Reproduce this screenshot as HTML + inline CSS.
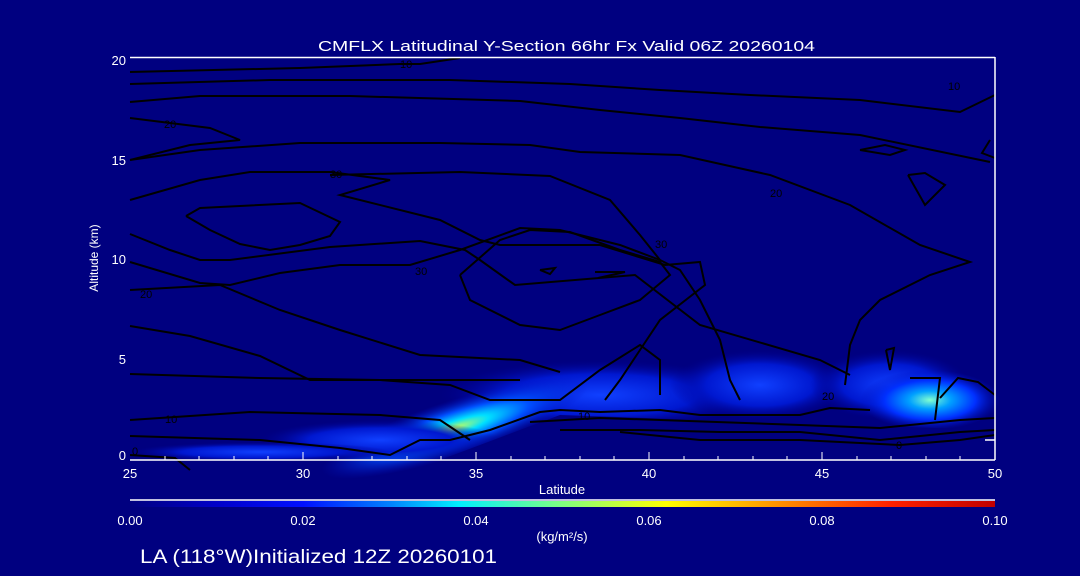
<!DOCTYPE html>
<html><head><meta charset="utf-8"><style>
html,body{margin:0;padding:0;background:#000080;}
svg{display:block}
text{font-family:"Liberation Sans",sans-serif;fill:#fff}
</style></head><body>
<svg width="1080" height="576" viewBox="0 0 1080 576" xmlns="http://www.w3.org/2000/svg">
<defs>
<linearGradient id="cb" x1="0" x2="1" y1="0" y2="0">
<stop offset="0" stop-color="#000080"/>
<stop offset="0.1" stop-color="#0000c8"/>
<stop offset="0.2" stop-color="#0010ff"/>
<stop offset="0.3" stop-color="#0080ff"/>
<stop offset="0.38" stop-color="#00f0ff"/>
<stop offset="0.5" stop-color="#80ff80"/>
<stop offset="0.62" stop-color="#ffff00"/>
<stop offset="0.75" stop-color="#ff9000"/>
<stop offset="0.88" stop-color="#ff2000"/>
<stop offset="1" stop-color="#c00000"/>
</linearGradient>
<radialGradient id="g1" cx="0.5" cy="0.5" r="0.5">
<stop offset="0" stop-color="#c0ff60"/><stop offset="0.25" stop-color="#00e0ff"/>
<stop offset="0.55" stop-color="#0050ff"/><stop offset="1" stop-color="#0010c0" stop-opacity="0"/>
</radialGradient>
<radialGradient id="g2" cx="0.5" cy="0.5" r="0.5">
<stop offset="0" stop-color="#1040ff"/><stop offset="0.6" stop-color="#0018d0"/>
<stop offset="1" stop-color="#000090" stop-opacity="0"/>
</radialGradient>
<radialGradient id="g3" cx="0.5" cy="0.5" r="0.5">
<stop offset="0" stop-color="#80ffd0"/><stop offset="0.3" stop-color="#00a0ff"/>
<stop offset="0.65" stop-color="#0030ff"/><stop offset="1" stop-color="#0010c0" stop-opacity="0"/>
</radialGradient>
</defs>
<text x="318" y="51" font-size="15" textLength="497" lengthAdjust="spacingAndGlyphs">CMFLX Latitudinal Y-Section 66hr  Fx Valid 06Z 20260104</text>
<g>
<ellipse cx="600" cy="395" rx="160" ry="35" fill="url(#g2)"/>
<ellipse cx="760" cy="385" rx="90" ry="35" fill="url(#g2)"/>
<ellipse cx="890" cy="385" rx="80" ry="35" fill="url(#g2)"/>
<ellipse cx="930" cy="400" rx="70" ry="30" fill="url(#g3)"/>
<ellipse cx="455" cy="428" rx="140" ry="28" fill="url(#g1)" transform="rotate(-18 455 428)"/>
<ellipse cx="380" cy="440" rx="120" ry="20" fill="url(#g2)"/>
<ellipse cx="260" cy="452" rx="130" ry="10" fill="url(#g2)"/>
<polygon points="440,460 560,415 995,430 995,460" fill="#000080"/>
</g>
<g fill="none" stroke="#000" stroke-width="2">
<polyline points="130,72 300,68 400,64 420,64 460,58"/>
<polyline points="130,84 270,80 450,80 570,84 660,90 750,95 860,100 960,112 995,95"/>
<polyline points="130,102 200,96 350,96 520,101 600,110 680,118 760,127 860,135 990,162"/>
<polyline points="130,118 210,128 240,140 190,145 130,160"/>
<polyline points="130,160 200,150 300,143 440,143 530,145 580,152 680,155 770,175 850,205 920,245 970,262 930,275 880,300 860,320 850,345 845,385"/>
<polyline points="330,175 460,172 550,176 610,200 640,235 660,260 680,270 700,300 720,340 730,380 740,400"/>
<polyline points="130,200 200,180 250,172 330,172 390,180 340,195 440,220 480,240 500,245 600,245 665,265 700,262 705,285 660,320 640,350 620,380 605,400"/>
<polyline points="186,216 200,208 300,203 340,222 330,236 300,245 270,250 240,244 210,230 186,216"/>
<polyline points="130,234 170,250 200,260 230,260 330,247 420,241 465,250 480,260 515,285 635,275 700,325 820,360 850,375"/>
<polyline points="130,262 200,283 230,285 280,273 340,265 410,265 460,250 520,228 560,230 620,245 660,260"/>
<polyline points="460,275 500,240 530,230 570,232 620,250 660,262 670,275 640,300 600,315 560,330 520,325 470,300 460,275"/>
<polyline points="540,270 555,268 550,274 540,270"/>
<polyline points="595,272 625,272 598,278"/>
<polyline points="130,290 220,285 280,310 340,330 420,355 520,360 560,372"/>
<polyline points="130,326 190,336 260,356 310,380 420,380 520,380"/>
<polyline points="130,374 260,378 380,380 450,385 490,400 560,400 600,370 640,345 660,360 660,395"/>
<polyline points="130,420 250,412 380,415 440,420 470,440"/>
<polyline points="130,436 260,440 340,448 390,455 420,440 450,440 490,430 540,412 560,410 600,412 660,410 700,415 800,415 830,408 870,410"/>
<polyline points="530,422 600,418 660,420 800,425 880,428 960,420 995,418"/>
<polyline points="560,430 640,430 720,432 800,432 880,440 960,432 995,430"/>
<polyline points="620,432 700,440 800,440 900,445 960,440 995,435"/>
<polyline points="130,455 175,458 190,470"/>
<polyline points="860,150 885,145 905,150 890,155 860,150"/>
<polyline points="908,175 925,173 945,185 925,205 908,175"/>
<polyline points="990,140 982,153 995,158"/>
<polyline points="886,350 894,348 890,370 886,350"/>
<polyline points="910,378 940,378 935,420"/>
<polyline points="940,398 958,378 978,382 995,395"/>
</g>
<g font-size="11">
<text x="400" y="68" style="fill:#000">10</text>
<text x="948" y="90" style="fill:#000">10</text>
<text x="164" y="128" style="fill:#000">20</text>
<text x="330" y="178" style="fill:#000">30</text>
<text x="770" y="197" style="fill:#000">20</text>
<text x="655" y="248" style="fill:#000">30</text>
<text x="415" y="275" style="fill:#000">30</text>
<text x="140" y="298" style="fill:#000">20</text>
<text x="165" y="423" style="fill:#000">10</text>
<text x="578" y="420" style="fill:#000">10</text>
<text x="822" y="400" style="fill:#000">20</text>
<text x="132" y="455" style="fill:#000">0</text>
<text x="896" y="449" style="fill:#000">0</text>
</g>
<g stroke="#fff" stroke-width="1.5" fill="none">
<line x1="130" y1="57.5" x2="995" y2="57.5"/>
<line x1="995" y1="57" x2="995" y2="460"/>
<line x1="130" y1="460" x2="995" y2="460"/>
<line x1="985" y1="440" x2="995" y2="440"/>
</g>
<g stroke="#fff" stroke-width="1">
<line x1="303" y1="452" x2="303" y2="460"/><line x1="476" y1="452" x2="476" y2="460"/>
<line x1="649" y1="452" x2="649" y2="460"/><line x1="822" y1="452" x2="822" y2="460"/>
<line x1="165" y1="456" x2="165" y2="460"/><line x1="199" y1="456" x2="199" y2="460"/>
<line x1="234" y1="456" x2="234" y2="460"/><line x1="268" y1="456" x2="268" y2="460"/>
<line x1="338" y1="456" x2="338" y2="460"/><line x1="372" y1="456" x2="372" y2="460"/>
<line x1="407" y1="456" x2="407" y2="460"/><line x1="441" y1="456" x2="441" y2="460"/>
<line x1="511" y1="456" x2="511" y2="460"/><line x1="545" y1="456" x2="545" y2="460"/>
<line x1="580" y1="456" x2="580" y2="460"/><line x1="614" y1="456" x2="614" y2="460"/>
<line x1="684" y1="456" x2="684" y2="460"/><line x1="718" y1="456" x2="718" y2="460"/>
<line x1="753" y1="456" x2="753" y2="460"/><line x1="787" y1="456" x2="787" y2="460"/>
<line x1="857" y1="456" x2="857" y2="460"/><line x1="891" y1="456" x2="891" y2="460"/>
<line x1="926" y1="456" x2="926" y2="460"/><line x1="960" y1="456" x2="960" y2="460"/>
</g>
<g font-size="13" text-anchor="end">
<text x="126" y="65">20</text><text x="126" y="165">15</text><text x="126" y="264">10</text>
<text x="126" y="364">5</text><text x="126" y="460">0</text>
</g>
<g font-size="13" text-anchor="middle">
<text x="130" y="478">25</text><text x="303" y="478">30</text><text x="476" y="478">35</text>
<text x="649" y="478">40</text><text x="822" y="478">45</text><text x="995" y="478">50</text>
<text x="562" y="494">Latitude</text>
</g>
<text x="98" y="258" font-size="12" text-anchor="middle" transform="rotate(-90 98 258)">Altitude (km)</text>
<line x1="130" y1="500" x2="995" y2="500" stroke="#fff" stroke-width="1.5"/>
<rect x="130" y="501" width="865" height="6" fill="url(#cb)"/>
<g font-size="13" text-anchor="middle">
<text x="130" y="525">0.00</text><text x="303" y="525">0.02</text><text x="476" y="525">0.04</text>
<text x="649" y="525">0.06</text><text x="822" y="525">0.08</text><text x="995" y="525">0.10</text>
<text x="562" y="541">(kg/m²/s)</text>
</g>
<text x="140" y="563" font-size="19" textLength="357" lengthAdjust="spacingAndGlyphs">LA (118°W)Initialized 12Z 20260101</text>
</svg>
</body></html>
